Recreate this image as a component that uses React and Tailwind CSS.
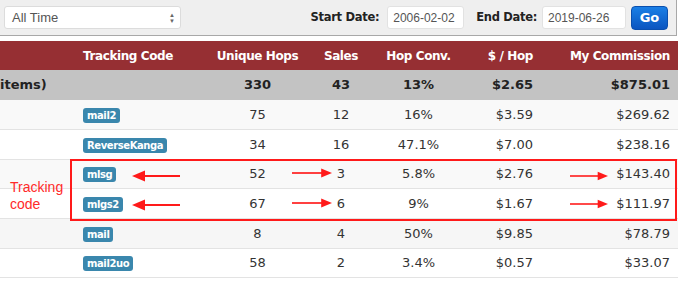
import React from "react";

const rows = [
  { code: "mail2", hops: 75, sales: 12, conv: "16%", perHop: "$3.59", comm: "$269.62", bg: "bg-[#f9f9f9]" },
  { code: "ReverseKanga", hops: 34, sales: 16, conv: "47.1%", perHop: "$7.00", comm: "$238.16", bg: "bg-white" },
  { code: "mlsg", hops: 52, sales: 3, conv: "5.8%", perHop: "$2.76", comm: "$143.40", bg: "bg-[#f9f9f9]" },
  { code: "mlgs2", hops: 67, sales: 6, conv: "9%", perHop: "$1.67", comm: "$111.97", bg: "bg-white" },
  { code: "mail", hops: 8, sales: 4, conv: "50%", perHop: "$9.85", comm: "$78.79", bg: "bg-[#f6f6f6]" },
  { code: "mail2uo", hops: 58, sales: 2, conv: "3.4%", perHop: "$0.57", comm: "$33.07", bg: "bg-white" },
];

function Arrow({ dir, className }) {
  // red annotation arrow, 48x12 box
  return (
    <svg className={className} width="48" height="12" viewBox="0 0 48 12">
      {dir === "left" ? (
        <>
          <line x1="10" y1="6" x2="48" y2="6" stroke="#ff1a1a" strokeWidth="2" />
          <polygon points="0,6 13,0.5 13,11.5" fill="#ff1a1a" />
        </>
      ) : (
        <>
          <line x1="0" y1="6" x2="38" y2="6" stroke="#ff1a1a" strokeWidth="2" />
          <polygon points="48,6 35,0.5 35,11.5" fill="#ff1a1a" />
        </>
      )}
    </svg>
  );
}

export default function App() {
  return (
    <div className="relative w-[680px] h-[284px] overflow-hidden bg-white font-['DejaVu_Sans',sans-serif]">
      {/* filter bar */}
      <div className="w-[677px] h-[36px] bg-[#efefef] border-b border-r border-[#a8a8a8] flex items-center pl-1 pr-2">
        <div className="w-[177px] h-[23px] bg-white border border-[#dcdcdc] rounded-[3px] flex items-center justify-between pl-[7px] pr-[5px] font-['Liberation_Sans',sans-serif] text-[13px] text-[#555]">
          <span>All Time</span>
          <span className="flex flex-col leading-none text-[6px] text-[#666]">
            <span>▲</span>
            <span>▼</span>
          </span>
        </div>
        <span className="ml-auto text-[11.5px] tracking-[-0.3px] font-bold text-[#222]">Start Date:</span>
        <div className="ml-2 w-[77px] h-[23px] bg-white border border-[#e2e2e2] rounded-[3px] flex items-center pl-[5px] font-['Liberation_Sans',sans-serif] text-[12px] text-[#555]">
          2006-02-02
        </div>
        <span className="ml-3 text-[11.5px] tracking-[-0.3px] font-bold text-[#222]">End Date:</span>
        <div className="ml-[5px] w-[84px] h-[23px] bg-white border border-[#e2e2e2] rounded-[3px] flex items-center pl-[5px] font-['Liberation_Sans',sans-serif] text-[12px] text-[#555]">
          2019-06-26
        </div>
        <button className="ml-[5px] w-[37px] h-[24px] rounded-[4px] bg-gradient-to-b from-[#1a7fe6] to-[#0b55c0] border border-[#0a4fae] text-white text-[13px] font-bold">
          Go
        </button>
      </div>

      <table className="mt-[5px] w-[678px] table-fixed border-collapse text-[13px] text-[#333]">
        <colgroup>
          <col className="w-[75px]" />
          <col className="w-[130px]" />
          <col className="w-[105px]" />
          <col className="w-[62px]" />
          <col className="w-[93px]" />
          <col className="w-[80px]" />
          <col className="w-[133px]" />
        </colgroup>
        <thead>
          <tr className="h-[29px] bg-[#962f33] text-white text-[12px] tracking-[-0.4px]">
            <th></th>
            <th className="text-left pl-2 font-bold">Tracking Code</th>
            <th className="text-center font-bold">Unique Hops</th>
            <th className="text-center font-bold">Sales</th>
            <th className="text-center font-bold">Hop Conv.</th>
            <th className="text-right pr-3 font-bold">$ / Hop</th>
            <th className="text-right pr-2 font-bold">My Commission</th>
          </tr>
        </thead>
        <tbody>
          <tr className="h-[30px] bg-[#c3c3c3] font-bold text-[#222]">
            <td className="text-left whitespace-nowrap">items)</td>
            <td></td>
            <td className="text-center">330</td>
            <td className="text-center">43</td>
            <td className="text-center">13%</td>
            <td className="text-right pr-3">$2.65</td>
            <td className="text-right pr-2">$875.01</td>
          </tr>
          {rows.map((r) => (
            <tr key={r.code} className={`h-[29.67px] border-b border-[#e3e3e3] ${r.bg}`}>
              <td></td>
              <td className="pl-2">
                <span className="inline-block bg-[#3a87ad] text-white text-[10px] tracking-[-0.4px] font-bold leading-[15px] px-[4px] rounded-[3px]">
                  {r.code}
                </span>
              </td>
              <td className="text-center">{r.hops}</td>
              <td className="text-center">{r.sales}</td>
              <td className="text-center">{r.conv}</td>
              <td className="text-right pr-3">{r.perHop}</td>
              <td className="text-right pr-2">{r.comm}</td>
            </tr>
          ))}
          <tr className="h-[20px] bg-white">
            <td colSpan={7}></td>
          </tr>
        </tbody>
      </table>

      {/* annotation overlay */}
      <div className="absolute left-[70px] top-[159px] w-[607px] h-[62px] border-2 border-[#ff1a1a]"></div>
      <div className="absolute left-[10px] top-[179px] font-['Liberation_Sans',sans-serif] text-[14px] leading-[17px] text-[#ff2a2a]">
        Tracking
        <br />
        code
      </div>
      <Arrow dir="left" className="absolute left-[132px] top-[170px]" />
      <Arrow dir="left" className="absolute left-[132px] top-[199px]" />
      <Arrow dir="right" className="absolute left-[292px] top-[167px] w-[40px]" />
      <Arrow dir="right" className="absolute left-[292px] top-[197px] w-[40px]" />
      <Arrow dir="right" className="absolute left-[570px] top-[170px] w-[38px]" />
      <Arrow dir="right" className="absolute left-[570px] top-[198px] w-[38px]" />
    </div>
  );
}
